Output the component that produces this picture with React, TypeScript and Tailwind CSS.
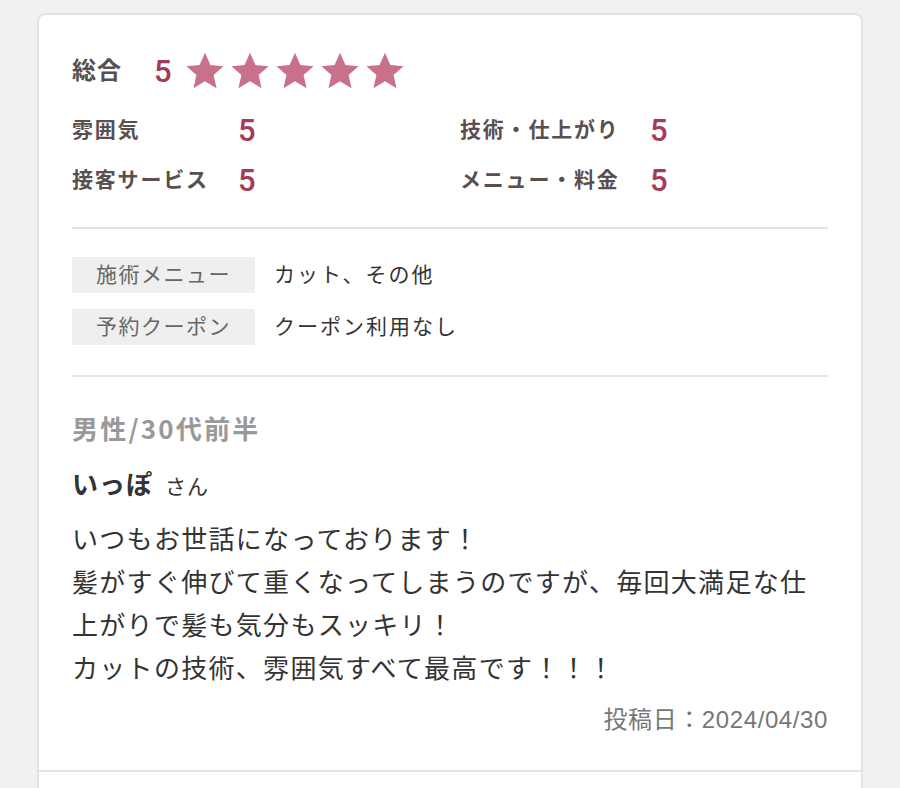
import React from 'react';

const Star = () => (
  <svg viewBox="0 0 24 24" className="w-[42px] h-[42px]" aria-hidden="true">
    <path
      d="M12 1.6l3.1 7 7.5.7-5.7 5 1.7 7.5L12 17.9l-6.6 3.9 1.7-7.5-5.7-5 7.5-.7z"
      fill="#c9718a"
    />
  </svg>
);

const scores = [
  [
    { label: '雰囲気', value: 5 },
    { label: '技術・仕上がり', value: 5 },
  ],
  [
    { label: '接客サービス', value: 5 },
    { label: 'メニュー・料金', value: 5 },
  ],
];

const details = [
  { label: '施術メニュー', value: 'カット、その他' },
  { label: '予約クーポン', value: 'クーポン利用なし' },
];

const body = [
  'いつもお世話になっております！',
  '髪がすぐ伸びて重くなってしまうのですが、毎回大満足な仕',
  '上がりで髪も気分もスッキリ！',
  'カットの技術、雰囲気すべて最高です！！！',
];

export default function App() {
  return (
    <div className="min-h-screen bg-[#f2f1ef] pt-[13px] px-[37px] font-['Liberation_Sans','Noto_Sans_CJK_JP',sans-serif]">
      <div className="bg-white border-2 border-b-0 border-[#e4e3e1] rounded-t-[8px]">
        <div className="px-[33px] pt-[36px] pb-[35px]">
          {/* overall */}
          <div className="h-[40px] flex items-center">
            <span className="text-[24px] font-bold text-[#5a4f4f] w-[82px] tracking-[1px]">総合</span>
            <span className="font-['Roboto',sans-serif] font-medium text-[31px] text-[#a63a5a] leading-none">5</span>
            <div className="flex gap-[3px] ml-[12px]">
              <Star />
              <Star />
              <Star />
              <Star />
              <Star />
            </div>
          </div>

          {scores.map((row, i) => (
            <div key={i} className={`grid grid-cols-[388px_1fr] h-[40px] ${i === 0 ? 'mt-[19px]' : 'mt-[10px]'}`}>
              {row.map((s, j) => (
                <div key={s.label} className="flex items-center">
                  <span className={`text-[21px] font-bold text-[#5a4f4f] tracking-[1.8px] ${j === 0 ? 'w-[166px]' : 'w-[190px]'}`}>
                    {s.label}
                  </span>
                  <span className="font-['Roboto',sans-serif] font-medium text-[31px] text-[#a63a5a] leading-none">{s.value}</span>
                </div>
              ))}
            </div>
          ))}

          <div className="mt-[27px] border-t-2 border-[#e4e3e1]" />

          <div className="mt-[28px] flex flex-col gap-[16px]">
            {details.map((d) => (
              <div key={d.label} className="flex items-center">
                <span className="w-[183px] h-[36px] flex items-center justify-center bg-[#efefef] text-[21px] text-[#666] tracking-[1.5px]">
                  {d.label}
                </span>
                <span className="ml-[19px] text-[21px] text-[#333] tracking-[2px]">{d.value}</span>
              </div>
            ))}
          </div>

          <div className="mt-[30px] border-t-2 border-[#e4e3e1]" />

          <p className="mt-[32px] h-[36px] flex items-center text-[26px] font-bold text-[#999] tracking-[2.2px] font-['Noto_Sans_CJK_JP',sans-serif]">
            男性/30代前半
          </p>

          <p className="mt-[21px] h-[36px] flex items-baseline text-[#333]">
            <span className="text-[26px] font-bold tracking-[1px]">いっぽ</span>
            <span className="ml-[12px] text-[21px] tracking-[1px]">さん</span>
          </p>

          <div className="mt-[17px] text-[26px] leading-[43px] text-[#333] tracking-[1.3px] whitespace-nowrap">
            {body.map((line) => (
              <div key={line}>{line}</div>
            ))}
          </div>

          <p className="mt-[14px] h-[30px] flex items-center justify-end text-[24px] text-[#777] tracking-[0.6px]">
            投稿日：2024/04/30
          </p>
        </div>
        <div className="border-t-2 border-[#e4e3e1] h-[100px]" />
      </div>
    </div>
  );
}
